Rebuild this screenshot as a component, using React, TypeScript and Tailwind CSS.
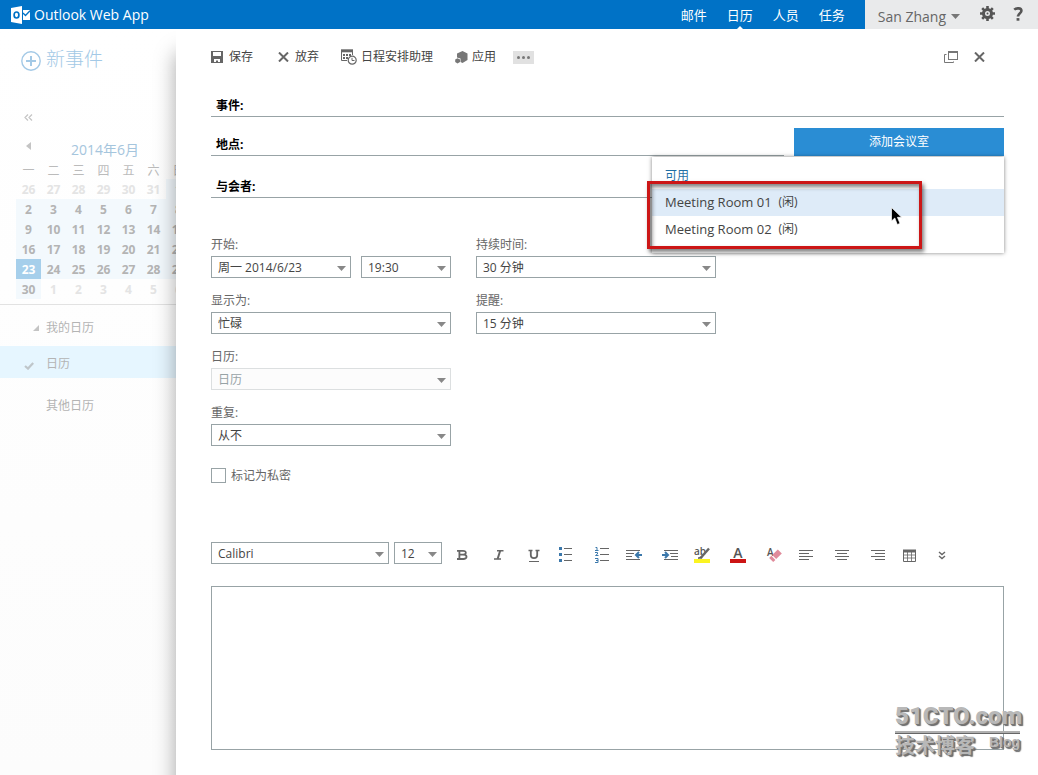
import type { ReactNode } from "react";
import { clsx } from "clsx";

const WEEKDAYS = ["一", "二", "三", "四", "五", "六", "日"];
const WEEKS = [
  [26, 27, 28, 29, 30, 31, 1],
  [2, 3, 4, 5, 6, 7, 8],
  [9, 10, 11, 12, 13, 14, 15],
  [16, 17, 18, 19, 20, 21, 22],
  [23, 24, 25, 26, 27, 28, 29],
  [30, 1, 2, 3, 4, 5, 6],
];

const ROOMS = [
  { name: "Meeting Room 01", status: "(闲)", active: true },
  { name: "Meeting Room 02", status: "(闲)", active: false },
];

const NAV = ["邮件", "日历", "人员", "任务"];

export default function App() {
  return (
    <div className="flex min-h-screen flex-col bg-white font-['Open_Sans','Noto_Sans_CJK_SC',sans-serif] text-[12px] leading-4 text-[#444]">
      <TopBar />
      <div className="flex flex-1 overflow-hidden">
        <Sidebar />
        <EventForm />
      </div>
    </div>
  );
}

function TopBar() {
  return (
    <header className="relative z-20 flex h-[29px] items-stretch bg-[#0072c6] text-white">
      <div className="flex flex-1 items-center gap-1 pl-[11px]">
        <OutlookLogo />
        <span className="text-[14px] leading-5">Outlook Web App</span>
      </div>
      <nav className="flex items-center gap-5 pr-5 text-[13px]">
        {NAV.map((item) => (
          <a key={item} href="#" className="relative flex h-full items-center">
            {item}
            {item === "日历" && (
              <svg className="absolute bottom-0 left-1/2 h-[3px] w-[6px] -translate-x-1/2" viewBox="0 0 6 3" aria-hidden="true">
                <path d="M0 3L3 0L6 3Z" fill="#fff" />
              </svg>
            )}
          </a>
        ))}
      </nav>
      <div className="flex items-center bg-[#e9eaeb] pr-[15px] pl-[13px] text-[#666]">
        <button type="button" className="flex items-center gap-[5px] pt-1 text-[14px]">
          San Zhang
          <Arrow className="h-[5px] w-[9px] text-[#777]" />
        </button>
        <button type="button" className="ml-5 pb-0.5" aria-label="设置">
          <GearIcon />
        </button>
        <button type="button" className="ml-[18px] pb-0.5" aria-label="帮助">
          <svg width="10" height="14" viewBox="0 0 10 14" fill="none" stroke="#555" strokeWidth="2.6">
            <path d="M1.2 2.6C3 1 8.6 .5 8.4 4C8.3 6.3 5 6.2 5 9.6" />
            <path d="M3.6 12.4H6.4" />
          </svg>
        </button>
      </div>
    </header>
  );
}

function Sidebar() {
  return (
    <aside className="w-44 shrink-0 overflow-hidden bg-linear-to-b from-white to-[#fcfcfc] pt-5 text-[#b4b4b4]">
      <button type="button" className="ml-[21px] flex h-5 items-center gap-[5px] text-[19px] font-light text-[#a3c9e6]">
        <svg className="mt-1" width="20" height="20" viewBox="0 0 20 20" fill="none" stroke="currentColor">
          <circle cx="10" cy="10" r="9.2" strokeWidth="1.4" />
          <path d="M10 5V15M5 10H15" strokeWidth="2" />
        </svg>
        新事件
      </button>
      <button type="button" className="mt-10 ml-6 flex h-4 items-center" aria-label="折叠">
        <svg width="9" height="7" viewBox="0 0 9 7" fill="none" stroke="#c4c4c4" strokeWidth="1.2">
          <path d="M4 .5L1 3.5L4 6.5M8 .5L5 3.5L8 6.5" />
        </svg>
      </button>

      <div className="mt-[15px] flex h-5 items-center pl-[26px]">
        <button type="button" aria-label="上个月">
          <svg className="mb-2" width="5" height="8" viewBox="0 0 5 8">
            <path d="M5 0V8L0 4Z" fill="#c4c4c4" />
          </svg>
        </button>
        <span className="ml-10 text-[14px] text-[#a5c5dd]">2014年6月</span>
      </div>
      <table className="ml-4 w-[175px] table-fixed text-center">
        <thead>
          <tr className="h-[19px]">
            {WEEKDAYS.map((day) => (
              <th key={day} className="px-0 pt-0.5 pb-0 font-normal text-[#bbb]">{day}</th>
            ))}
          </tr>
        </thead>
        <tbody>
          {WEEKS.map((week, row) => (
            <tr key={row} className="h-5 font-bold">
              {week.map((day, col) => {
                const inMonth = row === 0 ? col === 6 : row === 5 ? col === 0 : true;
                const today = row === 4 && col === 0;
                return (
                  <td
                    key={col}
                    className={clsx("px-0 pt-0.5 pb-0", today ? "bg-[#a6cfeb] text-white" : inMonth ? "bg-[#f3f9fd] text-[#b4b4b4]" : "text-[#e4e4e4]")}
                  >
                    {day}
                  </td>
                );
              })}
            </tr>
          ))}
        </tbody>
      </table>

      <div className="mt-[5px] border-t border-[#e2e2e2]" />
      <div className="mt-[13px] flex h-5 items-center gap-[7px] pl-[33px]">
        <svg width="6" height="6" viewBox="0 0 6 6" aria-hidden="true">
          <path d="M6 0V6H0Z" fill="#c4c4c4" />
        </svg>
        我的日历
      </div>
      <a href="#" className="mt-2 flex h-8 items-center gap-3 bg-[#e6f6ff] pt-[3px] pl-6">
        <svg className="mt-1" width="10" height="8" viewBox="0 0 10 8" fill="none" stroke="#bfc6ca" strokeWidth="2.2" aria-hidden="true">
          <path d="M1 4L4 6.6L9.2 1" />
        </svg>
        日历
      </a>
      <div className="mt-[18px] flex h-5 items-center pl-[46px]">其他日历</div>
    </aside>
  );
}

function EventForm() {
  return (
    <main className="relative z-10 min-w-0 flex-1 bg-white pt-[18px] pr-[34px] pb-[25px] pl-[35px] shadow-[0_24px_20px_rgba(0,0,0,0.35)]">
      <div className="flex h-5 items-center text-[#444]">
        <button type="button" className="flex items-center gap-1.5">
          <SaveIcon />
          保存
        </button>
        <button type="button" className="ml-[25px] flex items-center gap-1.5">
          <CloseIcon />
          放弃
        </button>
        <button type="button" className="ml-[22px] flex items-center gap-1">
          <SchedulingIcon />
          日程安排助理
        </button>
        <button type="button" className="ml-[22px] flex items-center gap-1">
          <AppsIcon />
          应用
        </button>
        <button type="button" className="ml-[17px] flex h-[13px] w-[21px] items-center justify-center bg-[#e1e1e1]" aria-label="更多">
          <svg width="13" height="3" viewBox="0 0 13 3" fill="#777">
            <circle cx="1.5" cy="1.5" r="1.5" />
            <circle cx="6.5" cy="1.5" r="1.5" />
            <circle cx="11.5" cy="1.5" r="1.5" />
          </svg>
        </button>
        <div className="flex-1" />
        <button type="button" aria-label="弹出窗口">
          <svg width="14" height="12" viewBox="0 0 14 12" fill="none" stroke="#777">
            <rect x="4.5" y=".5" width="9" height="8" />
            <path d="M4.5 1.5H13.5M2.5 3.5H.5V11.5H9.5V10.5" />
          </svg>
        </button>
        <button type="button" className="mr-[19px] ml-4" aria-label="关闭">
          <CloseIcon />
        </button>
      </div>

      <LineField id="subject" label="事件:" className="mt-[27px]" />
      <div className="relative mt-[11px] flex items-end gap-2.5">
        <LineField id="location" label="地点:" className="flex-1" />
        <button type="button" className="h-7 w-[210px] bg-[#2a8dd4] text-white">添加会议室</button>
        <RoomMenu />
      </div>
      <LineField id="attendees" label="与会者:" className="mt-[19px]" />

      <div className="mt-[39px] flex flex-wrap gap-x-[25px]">
        <div className="flex w-60 flex-col gap-[15px]">
          <div className="flex items-end gap-2.5">
            <Field id="start-date" label="开始:" value="周一 2014/6/23" className="flex-1" />
            <Select id="start-time" label="开始时间" value="19:30" className="w-[90px]" />
          </div>
          <Field id="show-as" label="显示为:" value="忙碌" />
          <Field id="calendar" label="日历:" value="日历" disabled />
          <Field id="repeat" label="重复:" value="从不" />
        </div>
        <div className="flex w-60 flex-col gap-[15px]">
          <Field id="duration" label="持续时间:" value="30 分钟" />
          <Field id="reminder" label="提醒:" value="15 分钟" />
        </div>
      </div>

      <div className="mt-[22px] flex h-[15px] items-center gap-[5px]">
        <input id="private" type="checkbox" className="size-[15px] appearance-none border border-[#98a3a6] bg-white" />
        <label htmlFor="private" className="text-[#666]">标记为私密</label>
      </div>

      <EditorToolbar />
      <div className="relative mt-[22px]">
        <textarea aria-label="正文" className="block h-[164px] w-full resize-none border border-[#98a3a6] bg-white p-2 outline-none" />
        <Watermark />
      </div>
    </main>
  );
}

function LineField({ id, label, className }: { id: string; label: string; className?: string }) {
  return (
    <div className={clsx("flex h-[23px] items-center border-b border-[#98a3a6] pt-0.5 pl-[5px]", className)}>
      <label htmlFor={id} className="font-bold text-black">{label}</label>
      <input id={id} type="text" className="ml-2 min-w-0 flex-1 bg-transparent outline-none" />
    </div>
  );
}

type FieldProps = { id: string; label: string; value: string; className?: string; disabled?: boolean };

function Field({ id, label, value, className, disabled }: FieldProps) {
  return (
    <div className={clsx("flex flex-col gap-[3px]", className)}>
      <label htmlFor={id} className="text-[#666]">{label}</label>
      <Select id={id} value={value} disabled={disabled} />
    </div>
  );
}

function Select({ id, label, value, className, disabled }: Omit<FieldProps, "label"> & { label?: string }) {
  return (
    <div className={clsx("relative", className)}>
      <select
        id={id}
        aria-label={label}
        disabled={disabled}
        className="block h-[22px] w-full appearance-none border border-[#98a3a6] bg-white pt-0.5 pr-5 pl-1.5 text-[#444] outline-none disabled:border-[#dcdfe0] disabled:bg-[#fcfcfc] disabled:text-[#98a3a6] disabled:opacity-100"
      >
        <option>{value}</option>
      </select>
      <Arrow className="pointer-events-none absolute top-[10px] right-[5px] h-[5px] w-[9px] text-[#888]" />
    </div>
  );
}

function RoomMenu() {
  return (
    <div className="absolute top-full right-0 z-10 mt-px h-24 w-[352px] bg-white pt-[11px] shadow-[0_0_4px_rgba(0,0,0,0.5)]">
      <div className="h-[21px] pl-[13px] text-[#1f6fa5]">可用</div>
      <ul>
        {ROOMS.map((room) => (
          <li key={room.name}>
            <button
              type="button"
              className={clsx("flex h-[27px] w-full items-center gap-[7px] pb-0.5 pl-[13px] text-[#444]", room.active && "bg-[#deebf8]")}
            >
              <span className="text-[13px]">{room.name}</span>
              <span>{room.status}</span>
            </button>
          </li>
        ))}
      </ul>
      <div className="pointer-events-none absolute top-[24px] -left-[5px] h-[68px] w-[275px] border-[3px] border-[#cc1616] shadow-[2px_3px_4px_rgba(0,0,0,0.5),inset_2px_3px_4px_rgba(0,0,0,0.5)]" />
      <svg className="pointer-events-none absolute top-[50px] left-[239px]" width="12" height="19" viewBox="0 0 12 19" aria-hidden="true">
        <path d="M.5 .5V14L3.8 11L6.3 17.5L9 16.4L6.4 10.3H10.6Z" fill="#000" stroke="#fff" strokeWidth=".7" />
      </svg>
    </div>
  );
}

function ToolButton({ label, spaced, children }: { label: string; spaced?: boolean; children: ReactNode }) {
  return (
    <button type="button" aria-label={label} className={clsx("flex h-[22px] w-8 items-center justify-center", spaced && "mr-1")}>
      <svg className="mt-0.5 h-[18px] w-4" viewBox="0 0 16 18" fill="none" stroke="#666" strokeWidth="1">
        {children}
      </svg>
    </button>
  );
}

function EditorToolbar() {
  return (
    <div className="mt-[59px] flex h-[22px] items-center">
      <Select id="font" label="字体" value="Calibri" className="w-[178px]" />
      <Select id="font-size" label="字号" value="12" className="ml-[5px] w-12" />
      <div className="ml-1 flex">
        <ToolButton label="加粗" spaced>
          <path d="M3 5.8H9C13 5.8 12.5 9.6 9 9.6C13.8 9.6 13.5 14 9.4 14H3M5.4 5.8V14M5.4 9.6H9" strokeWidth="1.8" />
        </ToolButton>
        <ToolButton label="倾斜" spaced>
          <path d="M7 5.8H13.5M4 14H11" strokeWidth="1.4" />
          <path d="M10.2 5.8L7.6 14" strokeWidth="2" />
        </ToolButton>
        <ToolButton label="下划线">
          <path d="M2.5 5.5H6.5M9.5 5.5H13.5" strokeWidth="1.4" />
          <path d="M4.8 5.5V10.3C4.8 14 11.2 14 11.2 10.3V5.5" strokeWidth="1.8" />
          <path d="M3 16.5H13" />
        </ToolButton>
        <ToolButton label="项目符号" spaced>
          <path d="M6 3.5H14M6 9.5H14M6 15.5H14" />
          <path d="M1 3.5H4M1 9.5H4M1 15.5H4" stroke="#3b78ab" strokeWidth="3" />
        </ToolButton>
        <ToolButton label="编号">
          <path d="M6 3.5H15M6 9.5H15M6 15.5H15" />
          <path d="M1.5 2.5H3V5.5M1 5.5H4.5M1 7.5H3.5V9L1.5 10.5H4.5M1 13.5H4V17.5H1M2 15.5H4" stroke="#3b78ab" />
        </ToolButton>
        <ToolButton label="减少缩进" spaced>
          <path d="M0 5.5H14M0 8.5H8M0 11.5H6M0 14.5H14" />
          <path d="M16 10H10.5M13 7L10 10L13 13" stroke="#3b78ab" strokeWidth="2" />
        </ToolButton>
        <ToolButton label="增加缩进">
          <path d="M2 5.5H16M8 8.5H16M9 11.5H16M2 14.5H16" />
          <path d="M0 10H5.5M3 7L6 10L3 13" stroke="#3b78ab" strokeWidth="2" />
        </ToolButton>
        <ToolButton label="突出显示" spaced>
          <rect x="0" y="14" width="16" height="4" fill="#fbf421" stroke="none" />
          <text x="0" y="10" fontSize="10" fontWeight="600" fill="#555" stroke="none">ab</text>
          <path d="M15 3.5L7.5 12" strokeWidth="2.4" />
          <path d="M8 11L4 13.2H8Z" fill="#555" />
        </ToolButton>
        <ToolButton label="字体颜色" spaced>
          <rect x="0" y="14" width="16" height="4" fill="#cc1414" stroke="none" />
          <text x="8" y="13" textAnchor="middle" fontSize="14" fontWeight="600" fill="#555" stroke="none">A</text>
        </ToolButton>
        <ToolButton label="清除格式">
          <text x="1" y="11" fontSize="10" fontWeight="600" fill="#555" stroke="none">A</text>
          <path d="M11.8 4.5L15.8 8.5L10.2 14L6.2 10Z" fill="#e08b9b" stroke="none" />
          <path d="M5.3 10.8L9.4 14.9L7.2 17L3.2 12.9Z" fill="#e08b9b" stroke="none" />
        </ToolButton>
        <ToolButton label="左对齐" spaced>
          <path d="M1 5.5H15M1 8.5H11M1 11.5H15M1 14.5H11" />
        </ToolButton>
        <ToolButton label="居中" spaced>
          <path d="M1 5.5H15M3 8.5H13M1 11.5H15M3 14.5H13" />
        </ToolButton>
        <ToolButton label="右对齐">
          <path d="M1 5.5H15M5 8.5H15M1 11.5H15M5 14.5H15" />
        </ToolButton>
        <ToolButton label="插入表格">
          <path d="M5.5 6V16M9.5 6V16M2 10H13M2 13H13" strokeWidth=".8" />
          <path d="M1 6H14" strokeWidth="3" />
          <path d="M1.5 5V16.5H13.5V5" />
        </ToolButton>
        <ToolButton label="更多格式">
          <path d="M5 7L8 9.5L11 7M5 11L8 13.5L11 11" strokeWidth="1.4" />
        </ToolButton>
      </div>
    </div>
  );
}

function Watermark() {
  return (
    <div className="pointer-events-none absolute right-[-16px] bottom-[-8px] w-[125px] font-bold text-[#b8b8b8] [text-shadow:1px_1px_0_#777,2px_2px_1px_#666]">
      <div className="font-[Roboto,'Liberation_Sans',sans-serif] text-[24px] leading-[30px] font-black">51CTO.com</div>
      <div className="h-[3px] border-b border-[#666] bg-[#b0b0b0]" />
      <div className="flex items-start justify-between">
        <span className="text-[20px] leading-6">技术博客</span>
        <span className="font-['Liberation_Sans',sans-serif] text-[14px]">Blog</span>
      </div>
    </div>
  );
}

function Arrow({ className }: { className?: string }) {
  return (
    <svg className={className} viewBox="0 0 9 5" fill="currentColor" aria-hidden="true">
      <path d="M0 0H9L4.5 5Z" />
    </svg>
  );
}

function OutlookLogo() {
  return (
    <svg width="19" height="18" viewBox="0 0 19 18" aria-hidden="true">
      <path d="M0 2L11 0V18L0 16Z" fill="#fff" />
      <ellipse cx="5.5" cy="9" rx="2.4" ry="3" fill="none" stroke="#0072c6" strokeWidth="1.7" />
      <path d="M12 4H19V14H12Z" fill="#fff" />
      <path d="M12 7L14.5 9.5L19 4.8" fill="none" stroke="#0072c6" strokeWidth="1.3" />
    </svg>
  );
}

function GearIcon() {
  return (
    <svg width="15" height="15" viewBox="0 0 15 15" fill="none" stroke="#555" aria-hidden="true">
      <circle cx="7.5" cy="7.5" r="4" strokeWidth="3" />
      <path d="M7.5 0V3M7.5 12V15M0 7.5H3M12 7.5H15M2.2 2.2L4.3 4.3M10.7 10.7L12.8 12.8M2.2 12.8L4.3 10.7M10.7 4.3L12.8 2.2" strokeWidth="2.6" />
      <circle cx="7.5" cy="7.5" r="1" fill="#555" stroke="none" />
    </svg>
  );
}

function SaveIcon() {
  return (
    <svg width="12" height="12" viewBox="0 0 12 12" aria-hidden="true">
      <path d="M0 0H12V12H0Z" fill="#666" />
      <path d="M2 1H10V5H2ZM3 8H9V11H7V9.5H5V11H3Z" fill="#fff" />
    </svg>
  );
}

function CloseIcon() {
  return (
    <svg width="11" height="10" viewBox="0 0 11 10" fill="none" stroke="#666" strokeWidth="2" aria-hidden="true">
      <path d="M1 .5L10 9.5M10 .5L1 9.5" />
    </svg>
  );
}

function SchedulingIcon() {
  return (
    <svg width="16" height="16" viewBox="0 0 16 16" fill="none" stroke="#666" aria-hidden="true">
      <path d="M.5 1V11.5H6M11.5 1V6" />
      <path d="M0 1.8H12" strokeWidth="3" />
      <path d="M2 6H10M2 9H7" strokeWidth="2" strokeDasharray="2 1" />
      <circle cx="11.2" cy="11.2" r="4" fill="#fff" strokeWidth="1.2" />
      <path d="M11 8.8V11.5H13.5" />
    </svg>
  );
}

function AppsIcon() {
  return (
    <svg width="13" height="13" viewBox="0 0 13 13" fill="#777" aria-hidden="true">
      <path d="M7.5 0L12.5 2.5V9L7.5 12L5.5 11V7.5L2 6.5V2.5Z" />
      <path d="M2.5 7.3L5 8.5V11L2.5 12.4L.2 11V8.5Z" />
    </svg>
  );
}
